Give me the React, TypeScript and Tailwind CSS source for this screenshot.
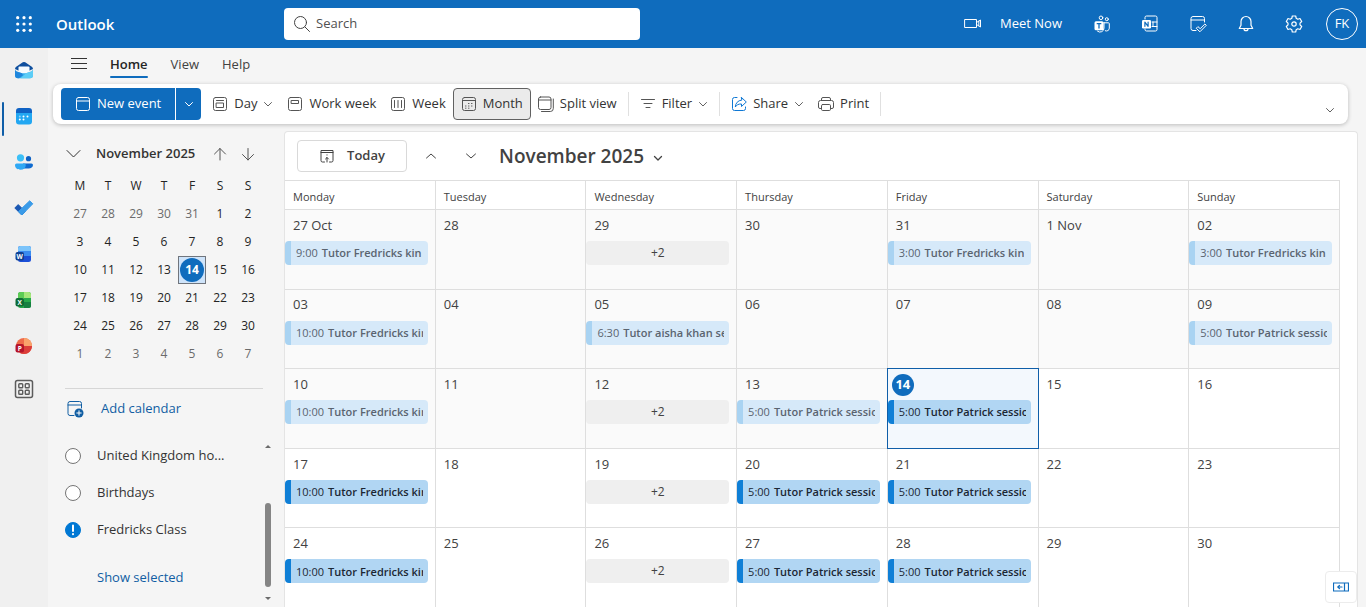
import { ReactNode } from 'react'
import clsx from 'clsx'

type CalendarEvent = {
  time: string
  title: string
}

type DayCell = {
  label: string
  event?: CalendarEvent
  more?: number
}

const fredricks = (time: string): CalendarEvent => ({ time, title: 'Tutor Fredricks kin' })
const patrick: CalendarEvent = { time: '5:00', title: 'Tutor Patrick session' }

const weekdays = ['Monday', 'Tuesday', 'Wednesday', 'Thursday', 'Friday', 'Saturday', 'Sunday']

const TODAY = 18 // index of the 14th in the flattened grid

const weeks: DayCell[][] = [
  [
    { label: '27 Oct', event: fredricks('9:00') },
    { label: '28' },
    { label: '29', more: 2 },
    { label: '30' },
    { label: '31', event: fredricks('3:00') },
    { label: '1 Nov' },
    { label: '02', event: fredricks('3:00') },
  ],
  [
    { label: '03', event: fredricks('10:00') },
    { label: '04' },
    { label: '05', event: { time: '6:30', title: 'Tutor aisha khan session' } },
    { label: '06' },
    { label: '07' },
    { label: '08' },
    { label: '09', event: patrick },
  ],
  [
    { label: '10', event: fredricks('10:00') },
    { label: '11' },
    { label: '12', more: 2 },
    { label: '13', event: patrick },
    { label: '14', event: patrick },
    { label: '15' },
    { label: '16' },
  ],
  [
    { label: '17', event: fredricks('10:00') },
    { label: '18' },
    { label: '19', more: 2 },
    { label: '20', event: patrick },
    { label: '21', event: patrick },
    { label: '22' },
    { label: '23' },
  ],
  [
    { label: '24', event: fredricks('10:00') },
    { label: '25' },
    { label: '26', more: 2 },
    { label: '27', event: patrick },
    { label: '28', event: patrick },
    { label: '29' },
    { label: '30' },
  ],
]

const miniWeeks = [
  [27, 28, 29, 30, 31, 1, 2],
  [3, 4, 5, 6, 7, 8, 9],
  [10, 11, 12, 13, 14, 15, 16],
  [17, 18, 19, 20, 21, 22, 23],
  [24, 25, 26, 27, 28, 29, 30],
  [1, 2, 3, 4, 5, 6, 7],
]

type IconProps = {
  children: ReactNode
  size?: number
  className?: string
}

const Icon = ({ children, size = 16, className }: IconProps) => (
  <svg
    width={size}
    height={size}
    viewBox={`0 0 ${size} ${size}`}
    fill="none"
    stroke="currentColor"
    strokeWidth="1"
    strokeLinecap="round"
    strokeLinejoin="round"
    className={clsx('shrink-0', className)}
    aria-hidden="true"
  >
    {children}
  </svg>
)

const ChevronDown = ({ className }: { className?: string }) => (
  <Icon size={10} className={className}>
    <path d="M1.5 3.5 5 7l3.5-3.5" />
  </Icon>
)

/* ---------- app bar ---------- */

const HeaderButton = ({ label, children }: { label: string; children: ReactNode }) => (
  <button type="button" aria-label={label} className="flex h-12 w-12 items-center justify-center">
    {children}
  </button>
)

const AppHeader = () => (
  <header className="flex h-12 shrink-0 items-center bg-[#0f6cbd] text-white">
    <div className="flex w-71 shrink-0 items-center">
      <button type="button" aria-label="App launcher" className="flex h-12 w-12 items-center justify-center">
        <svg width="16" height="16" viewBox="0 0 16 16" fill="currentColor" aria-hidden="true">
          {[1.7, 8, 14.3].map((y) => [1.7, 8, 14.3].map((x) => <circle key={`${x}-${y}`} cx={x} cy={y} r="1.6" />))}
        </svg>
      </button>
      <a href="#" className="ml-2 text-[15px] font-semibold">Outlook</a>
    </div>
    <div className="flex h-8 w-89 items-center gap-1 rounded-sm bg-white pl-2 text-[#424242]">
      <Icon size={20}>
        <circle cx="8.5" cy="8.5" r="6" />
        <path d="m13 13 4.500 4.500" />
      </Icon>
      <input
        type="search"
        aria-label="Search"
        placeholder="Search"
        className="min-w-0 flex-1 bg-transparent text-[13px] outline-none placeholder:text-[#505050]"
      />
    </div>
    <div className="ml-auto flex items-center">
      <button type="button" className="flex h-12 items-center gap-[18px] pr-4 text-[13px]">
        <Icon size={18}>
          <path d="M1 4.500h11.500v8H1zM12.500 7.500l4-2.500v7l-4-2.500M14.800 6.200v4.600" />
        </Icon>
        Meet Now
      </button>
      <HeaderButton label="Teams">
        <Icon size={20}>
          <circle cx="9" cy="3.800" r="1.800" />
          <circle cx="14.800" cy="5.200" r="1.500" />
          <path d="M12 8.800h4.500a.8.8 0 0 1 .8.800v4.600a2.800 2.800 0 0 1-4 2.600M12 8.500v5.500a4 4 0 0 1-6.500 3.200" />
          <rect x="2.500" y="7.300" width="9" height="9" rx="1.500" fill="currentColor" stroke="none" />
          <path d="M5.200 9.700h3.600M7 9.700v4.300" stroke="#0f6cbd" strokeWidth="1.300" />
        </Icon>
      </HeaderButton>
      <HeaderButton label="OneNote feed">
        <Icon size={20}>
          <path d="M5 5V3.500a1.500 1.500 0 0 1 1.500-1.500h9a1.500 1.500 0 0 1 1.500 1.500v12a1.500 1.500 0 0 1-1.500 1.500h-9A1.500 1.500 0 0 1 5 15.500V15M12 8h5M12 12.500h5M13 8v4.500" />
          <rect x="2" y="6" width="9" height="8.500" rx="1.200" fill="currentColor" stroke="none" />
          <path d="M4.900 12.300V8.200l3.200 4.100V8.200" stroke="#0f6cbd" strokeWidth="1.200" />
        </Icon>
      </HeaderButton>
      <HeaderButton label="My Day">
        <Icon size={20}>
          <path d="M8 16.500H5A2 2 0 0 1 3 14.500v-10a2 2 0 0 1 2-2h9.500a2 2 0 0 1 2 2V8M3 6h13.500" />
          <path d="m8.500 14 1.400-1.400 2.300 2.100 4.700-4.700 1.400 1.300-6.100 6.200z" />
        </Icon>
      </HeaderButton>
      <HeaderButton label="Notifications">
        <Icon size={20}>
          <path d="M10 2.500a5 5 0 0 1 5 5v3.700l1.700 3.300H3.300L5 11.200V7.500a5 5 0 0 1 5-5zM8 14.700a2 2 0 0 0 4 0" strokeWidth="1.200" />
        </Icon>
      </HeaderButton>
      <HeaderButton label="Settings">
        <Icon size={20}>
          <path
            d="M8.300 2h3.400l.5 2.300 1.600.9 2.200-.7 1.700 3L16 9.100v1.800l1.700 1.600-1.700 3-2.200-.7-1.600.9-.5 2.300H8.300l-.5-2.300-1.600-.9-2.200.7-1.700-3L4 10.900V9.100L2.300 7.500l1.700-3 2.200.7 1.600-.9z"
            strokeWidth="1.200"
          />
          <circle cx="10" cy="10" r="2.200" strokeWidth="1.200" />
        </Icon>
      </HeaderButton>
      <HeaderButton label="Account manager for FK">
        <span className="flex h-8 w-8 items-center justify-center rounded-full border border-white text-[13px]">FK</span>
      </HeaderButton>
    </div>
  </header>
)

/* ---------- left rail ---------- */

const MailIcon = () => (
  <svg width="20" height="20" viewBox="0 0 20 20" aria-hidden="true">
    <path d="M1 9c0-1 .4-1.700 1.200-2.200L8.800 2.300a2.200 2.200 0 0 1 2.400 0l6.600 4.500C18.600 7.300 19 8 19 9l-9 4z" fill="#0f4f9e" />
    <path d="M4.500 7.500a1 1 0 0 1 1-1h9a1 1 0 0 1 1 1v4L10 14l-5.500-2.500z" fill="#f5fbff" />
    <path d="M1 9c0 1.200.6 2 1.600 2.500l5.400 1.700h4l5.400-1.700C18.400 11 19 10.200 19 9v6.300a3 3 0 0 1-3 3H4a3 3 0 0 1-3-3z" fill="#35b0f0" />
    <path d="M19 9v6.300a3 3 0 0 1-3 3H6.500L12 13.200l5.400-1.700C18.400 11 19 10.200 19 9z" fill="#5ccdf6" />
    <path d="M1 9v6.300a3 3 0 0 0 3 3h1l4-3-1-2-5.400-1.800C1.600 11 1 10.200 1 9z" fill="#1f86dc" />
  </svg>
)

const CalendarIcon = () => (
  <svg width="20" height="20" viewBox="0 0 20 20" aria-hidden="true">
    <path d="M2 7h16v8.500a3 3 0 0 1-3 3H5a3 3 0 0 1-3-3z" fill="#22a7f2" />
    <path d="M2 7V5a3 3 0 0 1 3-3h10a3 3 0 0 1 3 3v2z" fill="#0f62c4" />
    <g fill="#fff">
      <circle cx="9.500" cy="10.500" r="1" />
      <circle cx="13.500" cy="10.500" r="1" />
      <circle cx="5.800" cy="13.500" r="1" />
      <circle cx="9.500" cy="13.500" r="1" />
      <circle cx="5.800" cy="10.500" r="1" opacity=".5" />
    </g>
  </svg>
)

const PeopleIcon = () => (
  <svg width="20" height="20" viewBox="0 0 20 20" aria-hidden="true">
    <circle cx="14.500" cy="6.700" r="2.600" fill="#0f62c4" />
    <path d="M9 11.500h8.500a1.500 1.500 0 0 1 1.500 1.500c0 2.300-2 3.500-4.500 3.500H9z" fill="#0f6bd0" />
    <circle cx="6.500" cy="5.800" r="3.600" fill="#3cc0f7" />
    <path d="M2.500 11.500h7.800a1.500 1.500 0 0 1 1.500 1.500c0 3-2 4.700-5.300 4.700S1 16 1 13a1.500 1.500 0 0 1 1.500-1.500z" fill="#2fa8f4" />
  </svg>
)

const TodoIcon = () => (
  <svg width="20" height="20" viewBox="0 0 20 20" aria-hidden="true">
    <path d="m.8 10 3.400-3.400 7 7-3.400 3.400z" fill="#1b58b3" strokeLinejoin="round" stroke="#1b58b3" />
    <path d="M4.400 13.600 15.700 2.800l3.100 3L7.800 17z" fill="#3a9be8" strokeLinejoin="round" stroke="#3a9be8" />
  </svg>
)

type OfficeIconProps = {
  letter: string
  badge: string
  children: ReactNode
}

const OfficeIcon = ({ letter, badge, children }: OfficeIconProps) => (
  <svg width="20" height="20" viewBox="0 0 20 20" aria-hidden="true">
    {children}
    <rect x="1.500" y="8" width="8.500" height="8.500" rx="2" fill={badge} />
    <text x="5.750" y="14.600" fontSize="6.500" fontWeight="700" textAnchor="middle" fill="#fff">{letter}</text>
  </svg>
)

const railItems = [
  { label: 'Mail', icon: <MailIcon /> },
  { label: 'Calendar', icon: <CalendarIcon />, active: true },
  { label: 'People', icon: <PeopleIcon /> },
  { label: 'To Do', icon: <TodoIcon /> },
  {
    label: 'Word',
    icon: (
      <OfficeIcon letter="W" badge="#103f91">
        <rect x="4" y="2" width="13" height="16" rx="2.500" fill="#1b4fd8" />
        <path d="M4 12V4.500A2.500 2.500 0 0 1 6.500 2h8A2.500 2.500 0 0 1 17 4.500V12z" fill="#3a8bf0" />
        <path d="M4 7V4.500A2.500 2.500 0 0 1 6.500 2h8A2.500 2.500 0 0 1 17 4.500V7z" fill="#7cc4fa" />
      </OfficeIcon>
    ),
  },
  {
    label: 'Excel',
    icon: (
      <OfficeIcon letter="X" badge="#0f6b35">
        <rect x="4" y="2" width="13" height="16" rx="2.500" fill="#27a94a" />
        <path d="M4 9V4.500A2.500 2.500 0 0 1 6.500 2H10v7z" fill="#5ccb55" />
        <path d="M10 2h4.500A2.500 2.500 0 0 1 17 4.500V8h-7z" fill="#a5e67a" />
        <path d="M10 12h7v3.500a2.500 2.500 0 0 1-2.500 2.500H10z" fill="#168040" />
      </OfficeIcon>
    ),
  },
  {
    label: 'PowerPoint',
    icon: (
      <OfficeIcon letter="P" badge="#b5142b">
        <circle cx="10" cy="10" r="8" fill="#ef6b4a" />
        <path d="M10 2a8 8 0 0 1 8 8h-8z" fill="#f9a26b" />
        <path d="M10 10h8a8 8 0 0 1-12 6.900z" fill="#dc3d3a" />
      </OfficeIcon>
    ),
  },
]

const AppRail = () => (
  <nav aria-label="Apps" className="flex w-12 shrink-0 flex-col bg-[#f0f0f0]">
    {railItems.map((item) => (
      <a
        key={item.label}
        href="#"
        aria-label={item.label}
        className="relative flex h-[46px] items-center justify-center pb-0.5"
      >
        {item.active && <span className="absolute top-2 bottom-1 left-0.5 w-0.5 rounded-full bg-[#0f5ea8]" />}
        {item.icon}
      </a>
    ))}
    <button type="button" aria-label="More apps" className="flex h-10 items-center justify-center pb-0.5 text-[#5c5c5c]">
      <Icon size={20}>
        <rect x="1.500" y="1.500" width="17" height="17" rx="2" strokeWidth="1.500" />
        <rect x="4.800" y="4.800" width="3.900" height="3.900" rx=".8" strokeWidth="1.400" />
        <rect x="11.300" y="4.800" width="3.900" height="3.900" rx=".8" strokeWidth="1.400" />
        <rect x="4.800" y="11.300" width="3.900" height="3.900" rx=".8" strokeWidth="1.400" />
        <rect x="11.300" y="11.300" width="3.900" height="3.900" rx=".8" strokeWidth="1.400" />
      </Icon>
    </button>
  </nav>
)

/* ---------- ribbon ---------- */

const MenuTabs = () => (
  <div className="flex h-9 shrink-0 items-center gap-[23px] pb-1 pl-[23px] text-[13px] leading-5 text-[#424242]">
    <button type="button" aria-label="Toggle navigation pane" className="text-[#333]">
      <Icon>
        <path d="M0 2.500h16M0 7.500h16M0 12.500h16" />
      </Icon>
    </button>
    <a
      href="#"
      className="relative font-semibold text-[#242424] after:absolute after:inset-x-0 after:-bottom-1 after:h-0.5 after:rounded-full after:bg-[#0f6cbd]"
    >
      Home
    </a>
    <a href="#">View</a>
    <a href="#">Help</a>
  </div>
)

type RibbonButtonProps = {
  icon: ReactNode
  label: string
  dropdown?: boolean
  selected?: boolean
}

const RibbonButton = ({ icon, label, dropdown, selected }: RibbonButtonProps) => (
  <button
    type="button"
    aria-pressed={selected}
    className={clsx(
      'flex h-8 items-center gap-1.5 rounded-sm border whitespace-nowrap',
      selected ? 'border-[#616161] bg-[#ebebeb] px-[7px]' : 'border-transparent px-1.5'
    )}
  >
    {icon}
    {label}
    {dropdown && <ChevronDown className="text-[#616161]" />}
  </button>
)

const Divider = () => <span className="mx-1 h-6 w-px bg-[#e0e0e0]" />

const Frame = () => <rect x="1.500" y="1.500" width="13" height="13" rx="2" />

const Ribbon = () => (
  <div
    role="toolbar"
    aria-label="Calendar commands"
    className="mr-[18px] ml-[5px] flex h-10 shrink-0 items-center rounded-lg bg-white px-2 text-[13px] text-[#333] shadow-[0_1px_4px_rgba(0,0,0,0.24)]"
  >
    <div className="mr-1 flex h-8 overflow-hidden rounded-sm text-white">
      <button type="button" className="flex items-center gap-1.5 bg-[#0f6cbd] px-3.5 whitespace-nowrap">
        <Icon>
          <Frame />
          <path d="M1.500 5h13" />
        </Icon>
        New event
      </button>
      <button type="button" aria-label="More new items" className="ml-px flex w-[25px] items-center justify-center bg-[#0f6cbd]">
        <ChevronDown />
      </button>
    </div>
    <RibbonButton
      label="Day"
      dropdown
      icon={<Icon className="text-[#555]"><Frame /><path d="M4.500 4.500h7M4.500 7h7v4.500h-7z" /></Icon>}
    />
    <RibbonButton
      label="Work week"
      icon={<Icon className="text-[#555]"><Frame /><path d="M4.500 4.500h7v3h-7z" /></Icon>}
    />
    <RibbonButton
      label="Week"
      icon={<Icon className="text-[#555]"><Frame /><path d="M4.500 4.500v7M8 4.500v7M11.500 4.500v7" /></Icon>}
    />
    <RibbonButton
      label="Month"
      selected
      icon={
        <Icon className="text-[#555]">
          <Frame />
          <path d="M1.500 4.500h13M7.500 7.500h.5M10.500 7.500h.5M4.500 10h.5M7.500 10h.5M10.500 10h.5M4.500 12.200h.5M7.500 12.200h.5" />
        </Icon>
      }
    />
    <RibbonButton
      label="Split view"
      icon={
        <Icon className="text-[#555]">
          <rect x=".5" y="1" width="12.500" height="12.500" rx="2" />
          <path d="M.5 4h12.500M15.300 3v9.500a3 3 0 0 1-3 3H3.500" />
        </Icon>
      }
    />
    <Divider />
    <RibbonButton
      label="Filter"
      dropdown
      icon={<Icon className="text-[#555]"><path d="M1.500 3.500h13M4 7.500h8M6 11.500h4" /></Icon>}
    />
    <Divider />
    <RibbonButton
      label="Share"
      dropdown
      icon={
        <Icon className="text-[#0f78d4]">
          <path d="M6 1.500H3.500a2 2 0 0 0-2 2v9a2 2 0 0 0 2 2h9a2 2 0 0 0 2-2V11" />
          <path d="M10.500 1.500 15.300 6l-4.800 4.500V8C7.500 7.800 5.500 9 4.300 11c.2-3.800 2.500-6.500 6.200-6.900z" />
        </Icon>
      }
    />
    <RibbonButton
      label="Print"
      icon={
        <Icon className="text-[#555]">
          <path d="M3.500 4.500V3a1.500 1.500 0 0 1 1.500-1.500h6A1.500 1.500 0 0 1 12.500 3v1.500M3.500 12.500H2A1.500 1.500 0 0 1 .5 11V6.500a2 2 0 0 1 2-2h11a2 2 0 0 1 2 2V11a1.500 1.500 0 0 1-1.500 1.500h-1.500" />
          <rect x="3.500" y="8.500" width="9" height="6" rx="1.200" />
        </Icon>
      }
    />
    <Divider />
    <button type="button" aria-label="Ribbon display options" className="mt-3 mr-[5px] ml-auto text-[#616161]">
      <ChevronDown />
    </button>
  </div>
)

/* ---------- side pane ---------- */

const MiniCalendar = () => (
  <section aria-label="Date picker" className="pl-[18px]">
    <div className="flex h-[41px] items-center pt-1 pr-[22px] text-[#333]">
      <button type="button" aria-label="Collapse calendar">
        <Icon>
          <path d="m1 4.500 6.500 6.500L14 4.500" />
        </Icon>
      </button>
      <h2 className="ml-3.5 flex-1 text-[13px] font-semibold whitespace-nowrap">November 2025</h2>
      <button type="button" aria-label="Previous month" className="flex w-7 justify-center text-[#555]">
        <Icon><path d="M8 14V2.500M2.500 8 8 2.500 13.500 8" /></Icon>
      </button>
      <button type="button" aria-label="Next month" className="flex w-7 justify-center text-[#555]">
        <Icon><path d="M8 2.500V14M2.500 8.500 8 14l5.500-5.500" /></Icon>
      </button>
    </div>
    <table className="text-center text-[12px] text-[#242424]">
      <thead>
        <tr>
          {weekdays.map((day) => (
            <th key={day} scope="col" abbr={day} className="h-7 w-7 p-0 font-normal">
              {day[0]}
            </th>
          ))}
        </tr>
      </thead>
      <tbody>
        {miniWeeks.map((week, row) => (
          <tr key={row}>
            {week.map((day) => {
              const outside = (row === 0 && day > 7) || row === 5
              const today = row === 2 && day === 14
              return (
                <td key={day} className="h-7 w-7 p-0">
                  <button
                    type="button"
                    className={clsx(
                      'flex h-7 w-7 items-center justify-center',
                      outside && 'text-[#6b6b6b]',
                      today && 'border border-[#70757d] bg-[#cfe4fa]'
                    )}
                  >
                    {today ? (
                      <span className="flex h-6 w-6 items-center justify-center rounded-full bg-[#0f6cbd] font-bold text-white">
                        {day}
                      </span>
                    ) : (
                      day
                    )}
                  </button>
                </td>
              )
            })}
          </tr>
        ))}
      </tbody>
    </table>
  </section>
)

const calendars = [
  { name: 'United Kingdom ho...', checked: false },
  { name: 'Birthdays', checked: false },
  { name: 'Fredricks Class', checked: true },
]

const CalendarList = () => (
  <div className="flex">
    <ul className="flex-1 pl-[17px] text-[13px] text-[#333]">
      {calendars.map((calendar) => (
        <li key={calendar.name}>
          <label className="flex h-[37px] items-center gap-4">
            <span className="relative flex h-4 w-4 shrink-0">
              <input
                type="checkbox"
                defaultChecked={calendar.checked}
                className="h-4 w-4 appearance-none rounded-full border border-[#757575] bg-white checked:border-[#0078d4] checked:bg-[#0078d4]"
              />
              {calendar.checked && (
                <Icon className="pointer-events-none absolute inset-0 text-white">
                  <path d="M8 3.500v5.500M8 12v.3" strokeWidth="2" />
                </Icon>
              )}
            </span>
            <span className="whitespace-nowrap">{calendar.name}</span>
          </label>
        </li>
      ))}
      <li className="flex h-[60px] items-center pl-8">
        <a href="#" className="text-[#115ea3]">Show selected</a>
      </li>
    </ul>
    <div className="mr-3 flex w-2 flex-col items-center py-2 text-[#6b6b6b]" aria-hidden="true">
      <svg width="6" height="3" viewBox="0 0 6 3"><path d="M3 0 6 3H0z" fill="currentColor" /></svg>
      <span className="mt-auto h-[84px] w-1.5 rounded-full bg-[#858585]" />
      <svg width="6" height="3" viewBox="0 0 6 3" className="mt-2.5"><path d="M3 3 0 0h6z" fill="currentColor" /></svg>
    </div>
  </div>
)

const SidePane = () => (
  <aside className="flex w-59 shrink-0 flex-col">
    <MiniCalendar />
    <div className="mt-5 mr-[21px] ml-[17px] border-t border-[#d6d6d6]">
      <button type="button" className="flex h-10 items-center gap-4 text-[13px] text-[#115ea3]">
        <Icon size={20}>
          <path d="M9 16.500H5a2 2 0 0 1-2-2v-10a2 2 0 0 1 2-2h9.500a2 2 0 0 1 2 2V9M3 6h13.500" />
          <circle cx="14" cy="14" r="4.500" fill="currentColor" stroke="none" />
          <path d="M14 11.800v4.400M11.800 14h4.400" stroke="#fff" />
        </Icon>
        Add calendar
      </button>
    </div>
    <div className="mt-2">
      <CalendarList />
    </div>
  </aside>
)

/* ---------- month view ---------- */

const EventChip = ({ event, past }: { event: CalendarEvent; past: boolean }) => (
  <button
    type="button"
    className={clsx(
      'flex h-6 w-full items-center overflow-hidden rounded-sm border-l-6 pt-px pr-[5px] pl-[5px] text-left text-[11px]',
      past ? 'border-[#a9d3f2] bg-[#d6e9f9] text-[#5a6470]' : 'border-[#0f7fd6] bg-[#b1d6f3] text-[#1b2733]'
    )}
  >
    <span className="flex gap-1 overflow-hidden whitespace-nowrap">
      <span>{event.time}</span>
      <span className="font-semibold">{event.title}</span>
    </span>
  </button>
)

const MonthGrid = () => (
  <table className="h-full w-full table-fixed border-separate border-spacing-0 text-[#424242]">
    <thead>
      <tr className="h-[29px]">
        {weekdays.map((day) => (
          <th
            key={day}
            scope="col"
            className="h-[29px] border-t border-r border-[#dedede] px-2 pt-1 pb-0 text-left text-[11px] font-normal"
          >
            {day}
          </th>
        ))}
      </tr>
    </thead>
    <tbody>
      {weeks.map((week, row) => (
        <tr key={row} className="h-1/5">
          {week.map((cell, col) => {
            const index = row * 7 + col
            const today = index === TODAY
            const past = index < TODAY
            return (
              <td
                key={col}
                className={clsx(
                  'relative border-t border-r border-[#dedede] p-0 align-top',
                  past && 'bg-[#fafafa]',
                  today && 'bg-[#f3f8fd]'
                )}
              >
                {today && <span className="pointer-events-none absolute -inset-px z-10 border border-[#0f5ea8]" />}
                <div className="flex h-[31px] items-center px-2 text-[13px]">
                  {today ? (
                    <span className="-ml-1 flex h-[22px] w-[22px] items-center justify-center rounded-full bg-[#0f6cbd] font-bold text-white">
                      {cell.label}
                    </span>
                  ) : (
                    cell.label
                  )}
                </div>
                <div className="flex h-6 pr-[7px]">
                  {cell.event && <EventChip event={cell.event} past={past} />}
                  {cell.more && (
                    <button type="button" className="h-6 w-full rounded-sm bg-[#efefef] text-[12px]">
                      +{cell.more}
                    </button>
                  )}
                </div>
              </td>
            )
          })}
        </tr>
      ))}
    </tbody>
  </table>
)

const MonthView = () => (
  <main className="relative mr-2 flex min-w-0 flex-1 flex-col rounded-t-sm border-x border-t border-[#e4e4e4] bg-white">
    <div className="flex h-12 shrink-0 items-center pl-3 text-[#424242]">
      <button
        type="button"
        className="flex h-8 w-[110px] items-center justify-center gap-3 rounded-sm border border-[#d9d9d9] text-[13px] font-semibold"
      >
        <Icon>
          <path d="M5.500 14H3.500A1.500 1.500 0 0 1 2 12.500v-10h12v10a1.500 1.500 0 0 1-1.500 1.500h-2M2 4.500h12M8 14V9.500M6.500 11 8 9.500 9.500 11M8 6.800v.3" />
        </Icon>
        Today
      </button>
      <button type="button" aria-label="Previous month" className="ml-1 flex w-10 justify-center">
        <Icon size={12}><path d="m1.500 8 4.500-4 4.500 4" /></Icon>
      </button>
      <button type="button" aria-label="Next month" className="flex w-10 justify-center">
        <Icon size={12}><path d="m1.500 4 4.500 4 4.500-4" /></Icon>
      </button>
      <button type="button" className="ml-2 flex items-center gap-2 text-[19px] font-semibold whitespace-nowrap">
        November 2025
        <Icon size={12} className="mt-1"><path d="m2.500 4.500 3.500 3.500 3.500-3.500" strokeWidth="1.300" /></Icon>
      </button>
    </div>
    <div className="min-h-0 flex-1 pr-[17px]">
      <MonthGrid />
    </div>
    <button
      type="button"
      aria-label="Open side panel"
      className="absolute right-0 bottom-1 z-10 flex h-8 w-8 items-center justify-center rounded-sm border border-[#ececec] bg-white text-[#0f6cbd]"
    >
      <Icon>
        <path d="M.5 4h15v8H.5zM11.500 4v8M9 8H5M6.500 6.300 4.800 8l1.700 1.700" strokeWidth="1.200" />
      </Icon>
    </button>
  </main>
)

export default function App() {
  return (
    <div className="flex h-screen flex-col overflow-hidden bg-[#f5f5f5] font-['Open_Sans','Noto_Sans',sans-serif]">
      <AppHeader />
      <div className="flex min-h-0 flex-1">
        <AppRail />
        <div className="flex min-w-0 flex-1 flex-col">
          <MenuTabs />
          <Ribbon />
          <div className="mt-[7px] flex min-h-0 flex-1">
            <SidePane />
            <MonthView />
          </div>
        </div>
      </div>
    </div>
  )
}
